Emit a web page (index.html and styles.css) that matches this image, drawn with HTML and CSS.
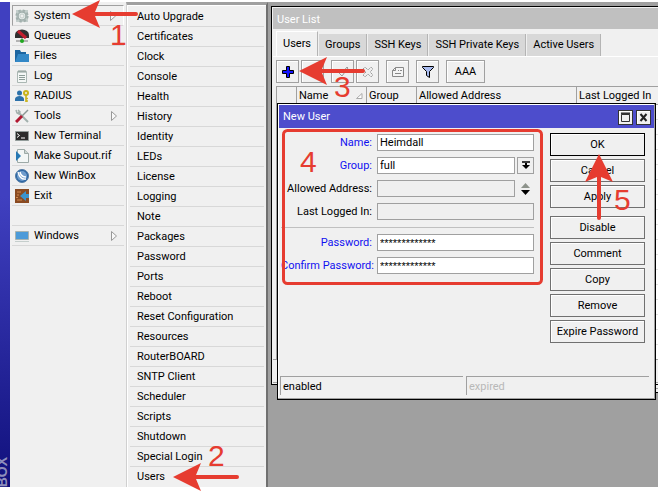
FILE: index.html
```html
<!DOCTYPE html>
<html lang="en">
<head>
    <meta charset="UTF-8">
    <meta name="viewport" content="width=device-width, initial-scale=1.0">
    <title>WinBox - User List</title>
    <link rel="stylesheet" href="styles.css">
</head>
<body>
    <div class="app">
        <div class="brand"><span>BOX</span></div>

        <nav class="menu">
            <ul>
                <li class="selected">
                    <svg class="icon" viewBox="0 0 14 14"><rect x="1" y="1" width="12" height="12" fill="#c3cecb"/><circle cx="7" cy="7" r="5.6" fill="none" stroke="#a2b0ad" stroke-width="2" stroke-dasharray="2.4 2"/><circle cx="7" cy="7" r="4" fill="#e8eeec" stroke="#a2b0ad" stroke-width="1.6"/><circle cx="7" cy="7" r="2" fill="#f0f0f0" stroke="#c3cecb"/></svg>
                    <a href="#">System</a>
                    <svg class="more" viewBox="0 0 6 10"><path d="M.5 .5v9l5-4.500z" fill="#f8f8f8" stroke="#999"/></svg>
                </li>
                <li>
                    <svg class="icon" viewBox="0 0 14 14"><path d="M0 9V6a7 5.500 0 0 1 14 0v3z" fill="#303030"/><path d="M3 2l8 7" stroke="#c31e2d" stroke-width="3"/><path d="M1 12h12M7 9v3" stroke="#777" stroke-width="1"/><circle cx="7" cy="12" r="2" fill="#20a820"/></svg>
                    <a href="#">Queues</a>
                </li>
                <li>
                    <svg class="icon" viewBox="0 0 14 14"><path d="M0 1h5l1 2h5v10H0z" fill="#1c65a0"/><path d="M3 5h11v8H0z" fill="#3388c7"/></svg>
                    <a href="#">Files</a>
                </li>
                <li>
                    <svg class="icon" viewBox="0 0 14 14"><path d="M2.500 2.500h9v11h-9z" fill="#f4f7f6" stroke="#aab7b3"/><path d="M4 1v3M6 1v3M8 1v3M10 1v3M4 6.500h6M4 8.500h6M4 10.500h6" stroke="#8c9c97" stroke-width="1"/></svg>
                    <a href="#">Log</a>
                </li>
                <li>
                    <svg class="icon" viewBox="0 0 14 14"><circle cx="4.500" cy="4" r="2.500" fill="#2c71aa"/><path d="M0 12V9.500Q1 7 4.500 7T9 9.500V12z" fill="#2c71aa"/><circle cx="11" cy="4" r="2" fill="none" stroke="#c9b21a" stroke-width="2"/><path d="M11 6v7M11 9.500h2M11 12h2" stroke="#c9b21a" stroke-width="1.600"/></svg>
                    <a href="#">RADIUS</a>
                </li>
                <li>
                    <svg class="icon" viewBox="0 0 14 14"><path d="M3 3l10 10" stroke="#a2b0ad" stroke-width="2"/><path d="M1 1l1 3 2 1 1-2-2-2" fill="none" stroke="#a2b0ad" stroke-width="1.500"/><path d="M13 1L7 7" stroke="#8a9693" stroke-width="1.500"/><path d="M7 7l-6 6" stroke="#b11730" stroke-width="3"/></svg>
                    <a href="#">Tools</a>
                    <svg class="more" viewBox="0 0 6 10"><path d="M.5 .5v9l5-4.500z" fill="#f8f8f8" stroke="#999"/></svg>
                </li>
                <li>
                    <svg class="icon" viewBox="0 0 14 14"><path d="M.5 2.500h13v9H.5z" fill="#2b2b2b" stroke="#929c9a"/><path d="M2 4.500l2.500 2L2 8.500M6 9h4" fill="none" stroke="#fff"/></svg>
                    <a href="#">New Terminal</a>
                </li>
                <li>
                    <svg class="icon" viewBox="0 0 14 14"><path d="M2.500 .5h7l4 4v9h-11z" fill="#f3f7f6" stroke="#9daaa7"/><path d="M9.500 .5v4h4" fill="#ccd6d3" stroke="#9daaa7"/><path d="M1 2l5 5-5 5z" fill="#2678b4"/></svg>
                    <a href="#">Make Supout.rif</a>
                </li>
                <li>
                    <svg class="icon" viewBox="0 0 14 14"><circle cx="7" cy="7" r="6.500" fill="#2b65a3" stroke="#537ca6"/><circle cx="7" cy="7" r="5" fill="#6f9ccc"/><path d="M3 3q2 8 8 7M5 3q1 5 6 5" fill="none" stroke="#fff" stroke-width="1.400"/></svg>
                    <a href="#">New WinBox</a>
                </li>
                <li>
                    <svg class="icon" viewBox="0 0 14 14"><path d="M0 0h14v14H0z" fill="#8a4b22"/><path d="M2 3h4M2 6h2M2 11h5M1 8.500h2" stroke="#d18a51"/><path d="M5 7l6-5v3h3v4h-3v3z" fill="#3b94cd"/></svg>
                    <a href="#">Exit</a>
                </li>
                <li></li>
                <li>
                    <svg class="icon" viewBox="0 0 14 14"><path d="M.5 2.500h13v8H.5z" fill="#4c9bd9" stroke="#a8b4b1"/><path d="M0 12.500h14" stroke="#c5cecc"/></svg>
                    <a href="#">Windows</a>
                    <svg class="more" viewBox="0 0 6 10"><path d="M.5 .5v9l5-4.500z" fill="#f8f8f8" stroke="#999"/></svg>
                </li>
            </ul>
        </nav>

        <nav class="submenu">
            <ul>
                <li><a href="#">Auto Upgrade</a></li>
                <li><a href="#">Certificates</a></li>
                <li><a href="#">Clock</a></li>
                <li><a href="#">Console</a></li>
                <li><a href="#">Health</a></li>
                <li><a href="#">History</a></li>
                <li><a href="#">Identity</a></li>
                <li><a href="#">LEDs</a></li>
                <li><a href="#">License</a></li>
                <li><a href="#">Logging</a></li>
                <li><a href="#">Note</a></li>
                <li><a href="#">Packages</a></li>
                <li><a href="#">Password</a></li>
                <li><a href="#">Ports</a></li>
                <li><a href="#">Reboot</a></li>
                <li><a href="#">Reset Configuration</a></li>
                <li><a href="#">Resources</a></li>
                <li><a href="#">RouterBOARD</a></li>
                <li><a href="#">SNTP Client</a></li>
                <li><a href="#">Scheduler</a></li>
                <li><a href="#">Scripts</a></li>
                <li><a href="#">Shutdown</a></li>
                <li><a href="#">Special Login</a></li>
                <li><a href="#">Users</a></li>
            </ul>
        </nav>

        <main class="desktop">
            <div class="window back-window"></div>

            <section class="window user-list">
                <h2 class="title">User List</h2>
                <div class="tabs">
                    <button type="button" class="active">Users</button>
                    <button type="button">Groups</button>
                    <button type="button">SSH Keys</button>
                    <button type="button">SSH Private Keys</button>
                    <button type="button">Active Users</button>
                </div>
                <div class="toolbar">
                    <div class="group">
                        <button type="button" aria-label="Add"><svg viewBox="0 0 12 12"><path d="M4.500 .5h3v4h4v3h-4v4h-3v-4h-4v-3h4z" fill="#1414ff" stroke="#000"/></svg></button>
                        <button type="button" aria-label="Remove"><svg viewBox="0 0 12 12"><path d="M1 4.500h10v3H1z" fill="#eee" stroke="#999"/></svg></button>
                    </div>
                    <div class="group">
                        <button type="button" aria-label="Enable"><svg viewBox="0 0 12 12"><path d="M1 6l2-1 2 2 5-6 1 1-6 8z" fill="#eee" stroke="#999"/></svg></button>
                        <button type="button" aria-label="Disable"><svg viewBox="0 0 12 12"><path d="M1 3l2-2 3 3 3-3 2 2-3 3 3 3-2 2-3-3-3 3-2-2 3-3z" fill="#eee" stroke="#999" stroke-dasharray="1.500 .7"/></svg></button>
                    </div>
                    <button type="button" aria-label="Comment"><svg viewBox="0 0 12 12"><path d="M3.500 1.500h8v9H.5v-6z M3.500 1.500v3h-3M6 4.500h1M8 4.500h2M3 7.500h6" fill="#f4f4f4" stroke="#888"/></svg></button>
                    <button type="button" aria-label="Filter"><svg viewBox="0 0 12 12"><path d="M.5 .5h11v1l-4 4v6l-3-2v-4l-4-4z" fill="#a9bcf0" stroke="#000"/></svg></button>
                    <button type="button" class="wide">AAA</button>
                </div>
                <table class="list">
                    <thead>
                        <tr>
                            <th class="col-flag"></th>
                            <th class="col-name"><div>Name <svg viewBox="0 0 8 6"><path d="M.5 5.500L6 .5v5z" fill="#fff" stroke="#aaa"/></svg></div></th>
                            <th class="col-group">Group</th>
                            <th class="col-address">Allowed Address</th>
                            <th>Last Logged In</th>
                        </tr>
                    </thead>
                </table>
                <div class="rows"></div>
                <div class="list-status"></div>
            </section>

            <section class="window dialog">
                <header class="title">
                    <h2>New User</h2>
                    <button type="button" aria-label="Maximize"><svg viewBox="0 0 11 11"><path d="M1.500 2.500h8v7h-8z" fill="none" stroke="#333"/><path d="M1 1.500h9" stroke="#333" stroke-width="2"/></svg></button>
                    <button type="button" aria-label="Close"><svg viewBox="0 0 11 11"><path d="M2.500 2l6 7M8.500 2l-6 7" stroke="#222" stroke-width="2"/></svg></button>
                </header>
                <form class="content">
                    <div class="fields">
                        <div class="field blue">
                            <label for="name">Name:</label>
                            <input type="text" id="name" value="Heimdall">
                        </div>
                        <div class="field blue">
                            <label for="group">Group:</label>
                            <select id="group"><option>full</option></select>
                            <button type="button" class="drop" aria-label="Open list"><svg viewBox="0 0 8 9"><path d="M0 1h8" stroke="#000" stroke-width="1.500"/><path d="M3 2h2v2h3L4 8 0 4h3z" fill="#000"/></svg></button>
                        </div>
                        <div class="field">
                            <label for="address">Allowed Address:</label>
                            <input type="text" id="address" class="off">
                            <button type="button" class="spin" aria-label="Add address"><svg viewBox="0 0 9 12"><path d="M0 5l4.500-5L9 5z" fill="#8d938b"/><path d="M0 7h9l-4.500 5z" fill="#000"/></svg></button>
                        </div>
                        <div class="field">
                            <label for="last">Last Logged In:</label>
                            <input type="text" id="last" class="off" readonly>
                        </div>
                        <hr>
                        <div class="field blue">
                            <label for="password">Password:</label>
                            <input type="text" id="password" class="secret" value="*************">
                        </div>
                        <div class="field blue">
                            <label for="confirm">Confirm Password:</label>
                            <input type="text" id="confirm" class="secret" value="*************">
                        </div>
                    </div>
                    <div class="actions">
                        <button type="button" class="default">OK</button>
                        <button type="button">Cancel</button>
                        <button type="button">Apply</button>
                        <button type="button" class="apart">Disable</button>
                        <button type="button">Comment</button>
                        <button type="button">Copy</button>
                        <button type="button">Remove</button>
                        <button type="button">Expire Password</button>
                    </div>
                </form>
                <footer class="status">
                    <span>enabled</span>
                    <span class="dim">expired</span>
                </footer>
            </section>
        </main>
    </div>

    <!-- step marks drawn over the screen -->
    <svg class="marks" width="658" height="491" viewBox="0 0 658 491">
        <defs>
            <path id="arrow" d="M0 0L28-14 23-2H64a2 2 0 0 1 0 4H23L28 14z"/>
        </defs>
        <use href="#arrow" x="72" y="14"/>
        <use href="#arrow" x="173" y="477"/>
        <use href="#arrow" x="299" y="71"/>
        <use href="#arrow" transform="translate(599 154) rotate(90)"/>
        <rect x="283.500" y="130.500" width="258" height="153" rx="4"/>
        <text x="110" y="45">1</text>
        <text x="208" y="466">2</text>
        <text x="334" y="97">3</text>
        <text x="300" y="172">4</text>
        <text x="614" y="210">5</text>
    </svg>
</body>
</html>
```
FILE: styles.css
```css
* {
    box-sizing: border-box;
}

body {
    margin: 0;
    background-color: #fff;
    font-family: "Roboto", sans-serif;
    font-size: 11px;
    line-height: 16px;
    color: #000;
    overflow: hidden;
}

button, input, select {
    font: inherit;
    color: inherit;
    margin: 0;
    padding: 0;
    border-radius: 0;
}

button {
    display: flex;
    align-items: center;
    justify-content: center;
    background-color: #f0f0f0;
    white-space: nowrap;
}

h2 {
    margin: 0;
    font-size: 11px;
    font-weight: normal;
}

ul {
    margin: 0;
    padding: 0;
    list-style: none;
}

a {
    color: #000;
    text-decoration: none;
}

svg {
    flex-shrink: 0;
}

.app {
    display: flex;
    height: 100vh;
    padding: 2px 0 4px;
}

/* left side */
.brand {
    width: 10px;
    overflow: hidden;
    display: flex;
    align-items: flex-end;
    justify-content: flex-end;
    background: linear-gradient(#4040c0 40%, #10107c);
}

.brand span {
    writing-mode: vertical-rl;
    transform: rotate(180deg);
    font-family: "Liberation Sans", sans-serif;
    font-size: 14px;
    font-weight: bold;
    color: #8d8dbb;
}

.menu {
    width: 116px;
    padding: 3px 2px 0;
    background-color: #f0f0f0;
}

.menu li {
    display: flex;
    align-items: center;
    gap: 5px;
    height: 20px;
    padding: 0 7px 0 3px;
    border-bottom: 1px solid #d8d8d8;
}

.menu .selected {
    height: 21px;
    padding-left: 2px;
    border: 1px solid #a0a0a0;
    border-right-color: #fff;
    border-bottom-color: #d8d8d8;
}

.menu a {
    flex: 1;
    white-space: nowrap;
}

.icon {
    width: 14px;
    height: 14px;
}

.more {
    width: 6px;
    height: 10px;
}

.submenu {
    width: 142px;
    padding: 5px 2px 0 3px;
    background-color: #f0f0f0;
    border-top: 3px solid #a0a0a0;
    border-left: 1px solid #d0d0d0;
    border-right: 2px solid #707070;
    box-shadow: inset 1px 1px #fff;
}

.submenu ul {
    margin-top: -3px;
}

.submenu li {
    height: 20px;
    padding: 2px 0 0 7px;
    border-bottom: 1px solid #d8d8d8;
}

.submenu li:last-child {
    border-bottom: none;
}

/* windows */
.desktop {
    flex: 1;
    position: relative;
    overflow: hidden;
    background-color: #a0a0a0;
}

.window {
    position: absolute;
    display: flex;
    flex-direction: column;
    padding: 1px;
    background-color: #f0f0f0;
    border: 1px solid #000;
}

.back-window {
    left: 40px;
    right: -20px;
    top: 40px;
    height: 351px;
    box-shadow: inset 0 -3px #f0f0f0, inset 0 -4px #a0a0a0;
}

.user-list {
    left: 3px;
    right: -20px;
    top: 4px;
    height: 379px;
}

.user-list .title {
    height: 21px;
    padding: 4px 4px 0;
    color: #fff;
    background-color: #c0c0c0;
}

.tabs {
    display: flex;
    align-items: flex-end;
    gap: 1px;
    height: 27px;
    padding: 2px 3px 0;
}

.tabs button {
    height: 22px;
    padding: 0 6px;
    border: none;
    border-right: 1px solid #b4b4b4;
    background-color: #d8d8d8;
}

.tabs .active {
    height: 25px;
    background-color: #f0f0f0;
    border-left: 1px solid #fff;
    border-top: 1px solid #fff;
}

.toolbar {
    display: flex;
    gap: 7px;
    padding: 3px;
    border-top: 1px solid #fff;
}

.group {
    display: flex;
    gap: 2px;
}

.toolbar button {
    width: 23px;
    height: 23px;
    border: 1px solid #a0a0a0;
    box-shadow: inset 1px 1px #fff;
}

.toolbar .wide {
    width: 39px;
}

.toolbar svg {
    width: 12px;
    height: 12px;
}

.list {
    width: 100%;
    table-layout: fixed;
    border-collapse: collapse;
    margin-left: 3px;
}

.list th {
    height: 18px;
    padding: 0 2px;
    border: 1px solid #a0a0a0;
    font-weight: normal;
    text-align: left;
    white-space: nowrap;
}

.list div {
    display: flex;
    justify-content: space-between;
    align-items: center;
}

.list svg {
    width: 8px;
    height: 6px;
}

.col-flag {
    width: 20px;
}

.col-name {
    width: 70px;
}

.col-group {
    width: 50px;
}

.col-address {
    width: 160px;
}

.rows {
    flex: 1;
    margin-left: 3px;
    border-left: 1px solid #a0a0a0;
    background: repeating-linear-gradient(#fff 0 14px, #e0e0e0 14px 15px);
}

.list-status {
    height: 24px;
    border-top: 1px solid #a0a0a0;
    border-bottom: 1px solid #a0a0a0;
}

/* new user dialog */
.dialog {
    left: 9px;
    top: 101px;
    width: 379px;
    height: 297px;
    box-shadow: inset -1px -1px #a0a0a0, inset 1px 1px #fff;
}

.dialog .title {
    display: flex;
    align-items: center;
    gap: 3px;
    height: 23px;
    padding: 1px 3px 0 4px;
    color: #fff;
    background-color: #4d4dcc;
}

.dialog .title h2 {
    flex: 1;
}

.dialog .title button {
    width: 15px;
    height: 15px;
    border: 1px solid #333;
    box-shadow: inset 1px 1px #fff;
}

.dialog .title svg {
    width: 11px;
    height: 11px;
}

.content {
    flex: 1;
    display: flex;
    justify-content: space-between;
    padding: 5px 9px 0 2px;
}

.fields {
    display: flex;
    flex-direction: column;
    gap: 6px;
    width: 253px;
    padding-top: 1px;
}

.field {
    display: flex;
    align-items: center;
    gap: 2px;
    height: 17px;
}

.field label {
    width: 91px;
    margin-right: 3px;
    text-align: right;
    white-space: nowrap;
}

.blue label {
    color: #1010f0;
}

.field input, .field select {
    flex: 1;
    min-width: 0;
    height: 17px;
    padding: 0 2px;
    appearance: none;
    background-color: #fff;
    border: 1px solid #a0a0a0;
}

.field .off {
    background-color: #f0f0f0;
}

.field .secret {
    font-family: "Liberation Sans", sans-serif;
}

.drop, .spin {
    width: 17px;
    height: 17px;
    border: 1px solid #a0a0a0;
}

.spin {
    border: none;
}

.drop svg {
    width: 8px;
    height: 9px;
}

.spin svg {
    width: 9px;
    height: 12px;
}

.fields hr {
    width: 100%;
    margin: 1px 0 0;
    border: none;
    border-top: 1px solid #c0c0c0;
}

.actions {
    display: flex;
    flex-direction: column;
    gap: 3px;
    width: 95px;
}

.actions button {
    height: 23px;
    border: 1px solid #707070;
    box-shadow: inset 1px 1px #fff;
}

.actions .default {
    border-color: #000;
}

.actions .apart {
    margin-top: 5px;
}

.status {
    display: flex;
    gap: 3px;
    padding: 0 5px 3px 1px;
}

.status span {
    flex: 1;
    height: 19px;
    padding: 2px;
    border-top: 1px solid #a0a0a0;
    border-left: 1px solid #a0a0a0;
}

.status .dim {
    color: #b8b8b8;
}

.marks {
    position: absolute;
    left: 0;
    top: 0;
    fill: #e63c30;
    pointer-events: none;
}

.marks rect {
    fill: none;
    stroke: #e63c30;
    stroke-width: 3;
}

.marks text {
    font-family: "Liberation Sans", sans-serif;
    font-size: 30px;
}
```
